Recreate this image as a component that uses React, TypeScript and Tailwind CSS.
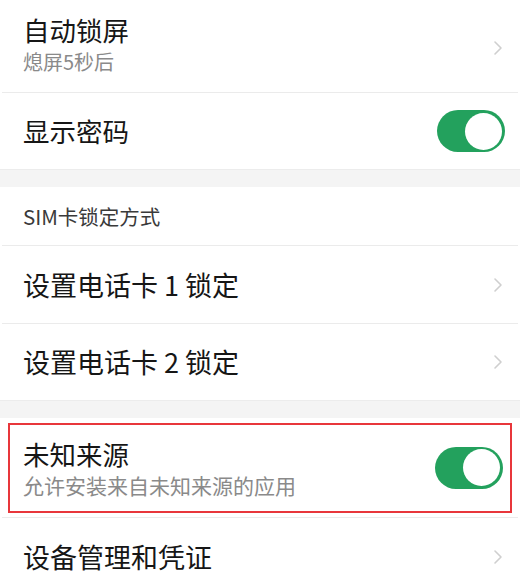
const font = { fontFamily: '"Noto Sans CJK SC", "Noto Sans", sans-serif' };

function Chevron() {
  return (
    <svg width="10" height="16" viewBox="0 0 10 16" className="shrink-0 mr-[17px]">
      <path d="M2 2l6 6-6 6" fill="none" stroke="#cfcfcf" strokeWidth="1.6" strokeLinecap="round" strokeLinejoin="round" />
    </svg>
  );
}

function Toggle({ className }: { className: string }) {
  return (
    <div className={`w-[68px] h-[42px] rounded-full bg-[#23a15d] flex items-center justify-end pr-[3px] shrink-0 ${className}`}>
      <div className="w-[37px] h-[37px] rounded-full bg-white" />
    </div>
  );
}

function Divider() {
  return <div className="h-px bg-[#ebebeb] mx-[2px]" />;
}

function Gap() {
  return <div className="h-[18px] bg-[#f4f4f4] border-t border-[#ececec]" />;
}

export default function App() {
  return (
    <div className="w-[520px] h-[575px] bg-white overflow-hidden text-[#161616]" style={font}>
      {/* 自动锁屏 */}
      <div className="h-[92px] flex items-start justify-between pl-[23px] pt-[12px]">
        <div className="flex flex-col">
          <span className="text-[26.5px] leading-[36px]">自动锁屏</span>
          <span className="text-[20px] leading-[28px] text-[#8a8a8a]">熄屏5秒后</span>
        </div>
        <div className="self-center -mt-[8px]">
          <Chevron />
        </div>
      </div>
      <Divider />
      <div className="h-[76px] flex items-center justify-between pl-[23px]">
        <span className="text-[26.5px] leading-[34px]">显示密码</span>
        <Toggle className="mr-[15px]" />
      </div>
      <Gap />
      <div className="h-[58px] flex items-center pl-[23px]">
        <span className="text-[20.5px] leading-[28px] text-[#3a3a3a]">SIM卡锁定方式</span>
      </div>
      <Divider />
      <div className="h-[77px] flex items-center justify-between pl-[23px]">
        <span className="text-[27px] leading-[34px]">设置电话卡 1 锁定</span>
        <Chevron />
      </div>
      <Divider />
      <div className="h-[76px] flex items-center justify-between pl-[23px]">
        <span className="text-[27px] leading-[34px]">设置电话卡 2 锁定</span>
        <Chevron />
      </div>
      <Gap />
      <div className="h-[99px] flex items-center">
        <div className="mx-[8px] w-[505px] h-[90px] border-2 border-[#e8363b] flex items-center justify-between pl-[13px]">
          <div className="flex flex-col">
            <span className="text-[26.5px] leading-[35px]">未知来源</span>
            <span className="text-[21px] leading-[28px] text-[#8a8a8a]">允许安装来自未知来源的应用</span>
          </div>
          <Toggle className="mr-[7px]" />
        </div>
      </div>
      <Divider />
      <div className="h-[80px] flex items-center justify-between pl-[23px] pb-[3px]">
        <span className="text-[27px] leading-[34px]">设备管理和凭证</span>
        <Chevron />
      </div>
    </div>
  );
}
